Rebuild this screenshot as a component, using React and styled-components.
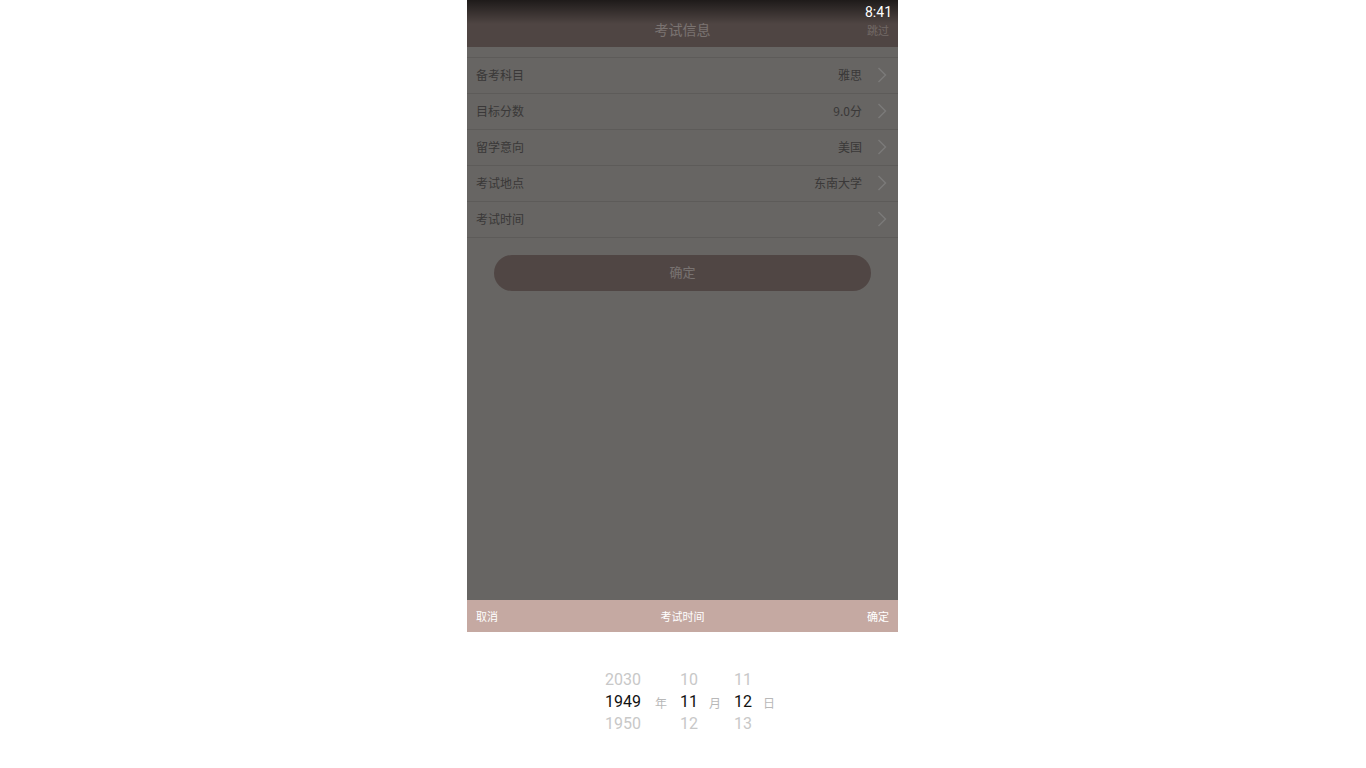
import styled, { createGlobalStyle } from "styled-components"

const GlobalStyle = createGlobalStyle`
    html, body {
        margin: 0;
        padding: 0;
        background: #ffffff;
        font-family: "Noto Sans CJK SC", "Noto Sans", sans-serif;
    }
`

const rows = [
    { label: '备考科目', value: '雅思' },
    { label: '目标分数', value: '9.0分' },
    { label: '留学意向', value: '美国' },
    { label: '考试地点', value: '东南大学' },
    { label: '考试时间', value: '' },
]

const columns = [
    { width: 44, unit: '年', items: ['2030', '1949', '1950'] },
    { width: 20, unit: '月', items: ['10', '11', '12'] },
    { width: 20, unit: '日', items: ['11', '12', '13'] },
]

const Chevron = () => (
    <svg width="10" height="16" viewBox="0 0 10 16">
        <polyline points="1.5,1 8.5,8 1.5,15" fill="none" stroke="#f6f4f2" strokeWidth="1.4" />
    </svg>
)

const App = () => {
    return (
        <Frame>
            <GlobalStyle />
            <Screen>
                <Header>
                    <Title>考试信息</Title>
                    <Skip>跳过</Skip>
                </Header>

                <List>
                    {rows.map(row => (
                        <Row key={row.label}>
                            <Label>{row.label}</Label>
                            <Value>{row.value}</Value>
                            <Chevron />
                        </Row>
                    ))}
                </List>

                <Confirm>确定</Confirm>

                <Overlay />
                <StatusBar>
                    <Clock>8:41</Clock>
                </StatusBar>
            </Screen>

            <Sheet>
                <SheetBar>
                    <BarAction>取消</BarAction>
                    <BarTitle>考试时间</BarTitle>
                    <BarAction>确定</BarAction>
                </SheetBar>

                <Wheel>
                    {columns.map(col => (
                        <WheelGroup key={col.unit}>
                            <WheelColumn width={col.width}>
                                {col.items.map((item, i) => (
                                    <WheelItem key={item + i} active={i === 1}>{item}</WheelItem>
                                ))}
                            </WheelColumn>
                            <Unit>{col.unit}</Unit>
                        </WheelGroup>
                    ))}
                </Wheel>
            </Sheet>
        </Frame>
    )
}

export default App

const Frame = styled.div`
    width: 431px;
    height: 768px;
    margin-left: calc(50% - 216px);
    display: flex;
    flex-direction: column;
    background: #ffffff;
    overflow: hidden;
`

const Screen = styled.div`
    position: relative;
    flex: 1;
    background: #cecac6;
    display: flex;
    flex-direction: column;
`

const Header = styled.div`
    height: 47px;
    box-sizing: border-box;
    padding: 12px 9px 0;
    background: #9e8a86;
    display: flex;
    align-items: center;
    justify-content: center;
    position: relative;
`

const Title = styled.div`
    font-size: 14px;
    color: #f4e6e2;
    line-height: 33px;
`

const Skip = styled.div`
    position: absolute;
    right: 9px;
    top: 22px;
    font-size: 11px;
    color: #e2d2cc;
`

const StatusBar = styled.div`
    position: absolute;
    top: 0;
    left: 0;
    right: 0;
    height: 24px;
    display: flex;
    justify-content: flex-end;
    align-items: flex-start;
    padding-right: 6px;
    background: linear-gradient(to bottom, rgba(0, 0, 0, 0.62), rgba(0, 0, 0, 0));
    z-index: 2;
`

const Clock = styled.div`
    font-family: Roboto, "Liberation Sans", sans-serif;
    font-size: 14px;
    color: #ffffff;
    line-height: 24px;
`

const List = styled.div`
    margin-top: 10px;
    border-top: 1px solid #bab6b2;
`

const Row = styled.div`
    height: 36px;
    box-sizing: border-box;
    border-bottom: 1px solid #bab6b2;
    display: flex;
    align-items: center;
    padding: 0 11px 2px 9px;
`

const Label = styled.div`
    font-size: 12px;
    color: #747170;
`

const Value = styled.div`
    margin-left: auto;
    margin-right: 15px;
    font-size: 12px;
    color: #747170;
`

const Confirm = styled.div`
    margin: 17px 27px 0;
    height: 36px;
    padding-bottom: 3px;
    box-sizing: border-box;
    border-radius: 18px;
    background: #a08c88;
    color: #f0e4e0;
    font-size: 13px;
    display: flex;
    align-items: center;
    justify-content: center;
`

const Overlay = styled.div`
    position: absolute;
    inset: 0;
    background: rgba(0, 0, 0, 0.5);
    z-index: 1;
`

const Sheet = styled.div`
    height: 168px;
    display: flex;
    flex-direction: column;
`

const SheetBar = styled.div`
    height: 32px;
    background: #c5a9a2;
    display: flex;
    align-items: center;
    justify-content: space-between;
    padding: 0 9px;
`

const BarAction = styled.div`
    font-size: 11px;
    color: #ffffff;
    width: 40px;

    &:last-child {
        text-align: right;
    }
`

const BarTitle = styled.div`
    font-size: 11px;
    color: #ffffff;
`

const Wheel = styled.div`
    flex: 1;
    display: flex;
    align-items: center;
    justify-content: center;
    padding-left: 11px;
    padding-top: 4px;
    gap: 12px;
`

const WheelGroup = styled.div`
    display: flex;
    align-items: center;
    gap: 10px;
`

const WheelColumn = styled.div`
    width: ${props => props.width}px;
    display: flex;
    flex-direction: column;
    align-items: center;
`

const WheelItem = styled.div`
    font-family: Roboto, "Liberation Sans", sans-serif;
    font-size: 16px;
    line-height: 22px;
    color: ${props => props.active ? '#111111' : '#c8c8c8'};
`

const Unit = styled.div`
    font-size: 12px;
    color: #b8b8b8;
    width: 12px;
`
